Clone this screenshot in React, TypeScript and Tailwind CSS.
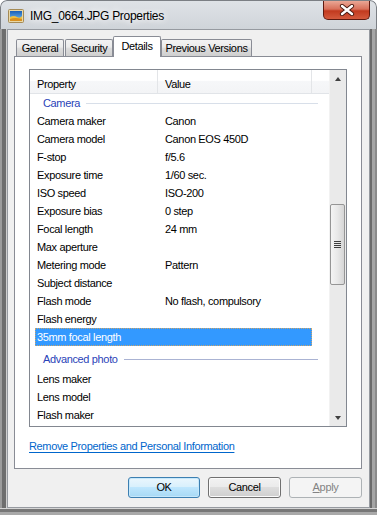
import React from "react";

const cameraRows: [string, string][] = [
  ["Camera maker", "Canon"],
  ["Camera model", "Canon EOS 450D"],
  ["F-stop", "f/5.6"],
  ["Exposure time", "1/60 sec."],
  ["ISO speed", "ISO-200"],
  ["Exposure bias", "0 step"],
  ["Focal length", "24 mm"],
  ["Max aperture", ""],
  ["Metering mode", "Pattern"],
  ["Subject distance", ""],
  ["Flash mode", "No flash, compulsory"],
  ["Flash energy", ""],
  ["35mm focal length", ""],
];

const advancedRows: [string, string][] = [
  ["Lens maker", ""],
  ["Lens model", ""],
  ["Flash maker", ""],
];

function PictureIcon() {
  return (
    <svg width="16" height="16" viewBox="0 0 16 16">
      <rect x="0.5" y="1.5" width="15" height="13" rx="1" fill="#e9d8a8" stroke="#a48a55" />
      <defs>
        <linearGradient id="sky" x1="0" y1="0" x2="0" y2="1">
          <stop offset="0" stopColor="#1a5fb8" />
          <stop offset="1" stopColor="#7cc4f0" />
        </linearGradient>
      </defs>
      <rect x="2" y="3" width="12" height="10" fill="url(#sky)" />
      <path d="M2 9 Q6 7 9 9 T14 8 V13 H2 Z" fill="#f0c040" />
      <path d="M2 11 Q7 9 14 11 V13 H2 Z" fill="#d89020" />
    </svg>
  );
}

function CloseX() {
  return (
    <svg width="16" height="12" viewBox="0 0 16 12">
      <path d="M3 2 L13 10 M13 2 L3 10" stroke="#4a1a10" strokeWidth="4.2" strokeLinecap="round" />
      <path d="M3 2 L13 10 M13 2 L3 10" stroke="#ffffff" strokeWidth="2.4" strokeLinecap="round" />
    </svg>
  );
}

function Row({ name, value, selected }: { name: string; value: string; selected?: boolean }) {
  return (
    <div
      className={
        "ml-[5px] w-[277px] h-[18px] flex items-center border " +
        (selected
          ? "bg-[#3399ff] text-white border-dotted border-[#c9a46a]"
          : "border-transparent text-black")
      }
    >
      <div className="w-[122px] pl-[1px] whitespace-nowrap">{name}</div>
      <div className="pl-[7px] whitespace-nowrap">{value}</div>
    </div>
  );
}

function Group({ label, line, tall }: { label: string; line: string; tall?: boolean }) {
  return (
    <div className={"flex items-center pl-[13px] pr-[11px] " + (tall ? "h-[24px] pt-[3px]" : "h-[18px]")}>
      <span className="text-[#2a43b8] whitespace-nowrap">{label}</span>
      <div className={"flex-1 h-px ml-[6px] " + line} />
    </div>
  );
}

function Tab({ label, w, selected }: { label: string; w: string; selected?: boolean }) {
  return (
    <div
      className={
        "flex items-center justify-center border border-b-0 border-[#898c95] rounded-t-[2px] " +
        w +
        (selected
          ? " h-[21px] -mb-px bg-white relative z-10 pb-[2px]"
          : " h-[17px] bg-[linear-gradient(to_bottom,#f3f3f3,#ebebeb_45%,#dddddd_50%,#cfcfcf)]")
      }
    >
      {label}
    </div>
  );
}

function ScrollBar() {
  return (
    <div className="w-[17px] flex flex-col bg-[#eaeaea] border-l border-[#f2f2f2]">
      <div className="h-[17px] flex items-center justify-center">
        <div className="w-0 h-0 border-l-[3.5px] border-r-[3.5px] border-b-[4px] border-l-transparent border-r-transparent border-b-[#404040]" />
      </div>
      <div className="h-[117px]" />
      <div className="ml-[0px] w-[15px] h-[81px] rounded-[2px] border border-[#959595] bg-[linear-gradient(to_right,#f4f4f4,#e8e8e8_50%,#d6d6d6)] flex flex-col items-center justify-center gap-[1px]">
        <div className="w-[7px] h-px bg-[#3e3e3e]" />
        <div className="w-[7px] h-px bg-[#3e3e3e]" />
        <div className="w-[7px] h-px bg-[#3e3e3e]" />
        <div className="w-[7px] h-px bg-[#3e3e3e]" />
      </div>
      <div className="flex-1" />
      <div className="h-[17px] flex items-center justify-center">
        <div className="w-0 h-0 border-l-[3.5px] border-r-[3.5px] border-t-[4px] border-l-transparent border-r-transparent border-t-[#404040]" />
      </div>
    </div>
  );
}

export default function App() {
  return (
    <div className="w-[377px] h-[515px] flex flex-col font-['Liberation_Sans',Arial,sans-serif] text-[11px] tracking-[-0.35px] text-black rounded-t-[7px] overflow-hidden bg-[linear-gradient(to_bottom,#dfe3e7,#cfd4d9_30px,#b8bcc0)]">
      {/* title bar */}
      <div className="h-[29px] flex items-start shrink-0 border-t border-l border-r border-[#7b7f84] rounded-t-[7px]">
        <div className="mt-[7px] ml-[7px]">
          <PictureIcon />
        </div>
        <div className="ml-[6px] mt-[6px] text-[12px] tracking-[-0.3px] text-black [text-shadow:0_0_6px_#ffffff,0_0_10px_#ffffff]">
          IMG_0664.JPG Properties
        </div>
        <div className="flex-1" />
        <div className="mr-[6px] w-[47px] h-[19px] rounded-b-[5px] border border-t-0 border-[#5e1a10] bg-[linear-gradient(to_bottom,#eaa795,#d8705a_45%,#c23a1f_55%,#d45a3d)] flex items-center justify-center">
          <CloseX />
        </div>
      </div>

      {/* middle */}
      <div className="flex flex-1">
        <div className="w-[7px] bg-[linear-gradient(to_right,#9c9c9c_0,#9c9c9c_2px,#6e6e6e_2px,#6e6e6e_6px,#d0d0d0_6px)]" />
        <div className="w-[363px] h-[479px] border border-[#969aa0] bg-[#f0f0f0] flex flex-col">
          {/* tabs */}
          <div className="mt-[6px] ml-[8px] flex items-end h-[20px]">
            <Tab label="General" w="w-[48px]" />
            <div className="w-px" />
            <Tab label="Security" w="w-[48px]" />
            <Tab label="Details" w="w-[48px]" selected />
            <Tab label="Previous Versions" w="w-[91px]" />
          </div>

          {/* panel */}
          <div className="ml-[6px] w-[348px] h-[413px] border border-[#898c95] bg-white flex flex-col">
            <div className="mt-[12px] ml-[14px] w-[318px] h-[358px] border border-[#828790] flex">
              <div className="w-[299px] flex flex-col overflow-hidden">
                <div className="h-[24px] shrink-0 flex border-b border-[#e1e4e8] bg-[linear-gradient(to_bottom,#ffffff,#ffffff_45%,#f6f7f9_50%,#f3f4f6)]">
                  <div className="w-[128px] pl-[7px] pt-[6px] border-r border-[#e3e5e8]">Property</div>
                  <div className="w-[154px] pl-[7px] pt-[6px] border-r border-[#e3e5e8]">Value</div>
                </div>
                <Group label="Camera" line="bg-[#d8dfe9]" />
                {cameraRows.map(([n, v], i) => (
                  <Row key={n} name={n} value={v} selected={i === cameraRows.length - 1} />
                ))}
                <Group label="Advanced photo" line="bg-[#aab3d3]" tall />
                {advancedRows.map(([n, v]) => (
                  <Row key={n} name={n} value={v} />
                ))}
              </div>
              <ScrollBar />
            </div>
            <div className="mt-[11px] ml-[14px] text-[#0066cc] underline underline-offset-[2px]">
              Remove Properties and Personal Information
            </div>
          </div>

          {/* buttons */}
          <div className="mt-[8px] mr-[7px] flex justify-end gap-[8px]">
            <div className="w-[72px] h-[21px] rounded-[3px] border border-[#3c7fb1] bg-[linear-gradient(to_bottom,#eaf6fd,#d9f0fc_45%,#bee6fd_50%,#a7d9f5)] shadow-[inset_0_0_0_1px_#c6e8fb] flex items-center justify-center">
              OK
            </div>
            <div className="w-[73px] h-[21px] rounded-[3px] border border-[#707070] bg-[linear-gradient(to_bottom,#f2f2f2,#ebebeb_45%,#dddddd_50%,#cfcfcf)] shadow-[inset_0_0_0_1px_#fbfbfb] flex items-center justify-center">
              Cancel
            </div>
            <div className="w-[73px] h-[21px] rounded-[3px] border border-[#adb2b5] bg-[#f4f4f4] text-[#838383] flex items-center justify-center">
              <span><span className="underline">A</span>pply</span>
            </div>
          </div>
        </div>
        <div className="w-[7px] bg-[linear-gradient(to_right,#6a6a6a_0,#6a6a6a_2px,#a5a5a5_2px,#a5a5a5_5px,#8a8a8a_5px)]" />
      </div>

      {/* bottom edge */}
      <div className="h-[7px] shrink-0 bg-[linear-gradient(to_bottom,#d5d5d5_0,#d5d5d5_1px,#777777_1px,#777777_4px,#a9a9a9_4px)]" />
    </div>
  );
}
